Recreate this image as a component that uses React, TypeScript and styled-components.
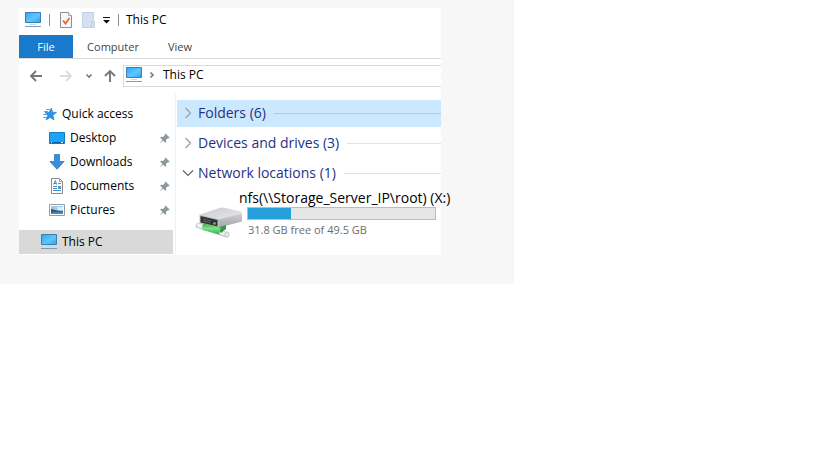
import React from "react";
import styled, { createGlobalStyle } from "styled-components";

const GlobalStyle = createGlobalStyle`
  * { box-sizing: border-box; }
  body {
    margin: 0;
    background: #ffffff;
    color: #000000;
    font: 12px/16px "Open Sans", "Noto Sans", sans-serif;
  }
  button { font: inherit; color: inherit; border: 0; padding: 0; background: none; cursor: pointer; }
  a { color: inherit; text-decoration: none; }
  svg { display: block; flex: none; }
`;

const Backdrop = styled.main`
  max-width: 514px;
  padding: 8px 73px 29px 19px;
  background: #f7f7f7;
`;

const Window = styled.section`
  background: #ffffff;
`;

const TitleBar = styled.header`
  display: flex;
  align-items: center;
  height: 27px;
  padding: 0 6px 4px;
`;

const QuickTools = styled.div`
  display: flex;
  align-items: center;
  gap: 8px;
  margin: 0 0 0 9px;
`;

const Divider = styled.span`
  width: 1px;
  height: 12px;
  margin-left: 7px;
  background: #8c8c8c;
`;

const Title = styled.h1`
  margin: 0 0 0 7px;
  font-size: 12px;
  font-weight: 400;
`;

const TabBar = styled.nav`
  display: flex;
  border-bottom: 1px solid #dadada;
`;

const Tab = styled.button<{ $active?: boolean; $width: number }>`
  width: ${(p) => p.$width}px;
  height: 23px;
  font-size: 11px;
  color: ${(p) => (p.$active ? "#ffffff" : "#444444")};
  background: ${(p) => (p.$active ? "#1979ca" : "transparent")};
`;

const AddressBar = styled.div`
  display: flex;
  align-items: center;
  padding: 6px 0 7px 10px;
`;

const NavButton = styled.button<{ $gap: number }>`
  margin-right: ${(p) => p.$gap}px;
`;

const AddressField = styled.div`
  display: flex;
  flex: 1;
  align-items: center;
  gap: 6px;
  height: 22px;
  padding: 0 2px 2px;
  border: 1px solid #d9d9d9;
  border-right: 0;
`;

const Body = styled.div`
  display: flex;
`;

const Sidebar = styled.nav`
  flex: none;
  width: 157px;
  padding: 8px 2px 1px 0;
  border-right: 1px solid #f0f0f0;
`;

const SideLink = styled.a<{ $indent: number; $gap: number; $selected?: boolean }>`
  display: flex;
  align-items: center;
  gap: ${(p) => p.$gap}px;
  height: 24px;
  margin-top: ${(p) => (p.$selected ? 8 : 0)}px;
  padding: 0 3px 0 ${(p) => p.$indent}px;
  background: ${(p) => (p.$selected ? "#d9d9d9" : "transparent")};
`;

const SideLabel = styled.span`
  flex: 1;
`;

const Content = styled.section`
  flex: 1;
  min-width: 0;
  padding: 6px 0 0 1px;
`;

const GroupHeader = styled.button<{ $selected?: boolean }>`
  display: flex;
  align-items: center;
  width: 100%;
  height: 27px;
  margin-bottom: 3px;
  padding: 0 0 1px 5px;
  gap: 4px;
  color: #1e3287;
  font-size: 14px;
  white-space: nowrap;
  background: ${(p) => (p.$selected ? "#cce8ff" : "transparent")};

  &::after {
    content: "";
    flex: 1;
    height: 1px;
    margin-left: 4px;
    background: ${(p) => (p.$selected ? "#aacbe2" : "#e2e2e2")};
  }
`;

const Drive = styled.article`
  padding-right: 5px;
`;

const DriveName = styled.h2`
  margin: 0;
  padding: 0 0 2px 62px;
  font-size: 14px;
  font-weight: 400;
  line-height: 15px;
  white-space: nowrap;
`;

const DriveDetails = styled.div`
  display: flex;
  gap: 4px;
  padding-left: 18px;
`;

const Capacity = styled.div`
  flex: 1;
`;

const CapacityBar = styled.div`
  height: 13px;
  border: 1px solid #bcbcbc;
  background: #e6e6e6;
`;

const CapacityUsed = styled.div`
  height: 100%;
  background: #26a0da;
`;

const CapacityText = styled.p`
  margin: 2px 0 0 1px;
  font-size: 11px;
  color: #6d6d6d;
`;

function Monitor() {
  return (
    <svg width="17" height="16" viewBox="0 0 17 16" aria-hidden="true">
      <defs>
        <linearGradient id="screen" x1="0" y1="0" x2="1" y2="1">
          <stop offset="0" stopColor="#2fa6f5" />
          <stop offset=".55" stopColor="#5fc5ff" />
          <stop offset="1" stopColor="#28a5f7" />
        </linearGradient>
      </defs>
      <path d="M.5 .5h15v10H.5z" fill="url(#screen)" stroke="#3c7fae" />
      <path d="M5 12.500h6" stroke="#c6dbe8" />
      <path d="M0 14.500h16" stroke="#7c9db8" />
    </svg>
  );
}

function CheckedPage() {
  return (
    <svg width="14" height="16" viewBox="0 0 14 16" aria-hidden="true">
      <path d="M1.500 .5h8l3 3v12h-11z" fill="#f8f8f8" stroke="#8f8f8f" />
      <path d="M9.500 .5v3h3" fill="#fff" stroke="#a5a5a5" />
      <path d="M4 8.500l2.500 3L10.500 6" fill="none" stroke="#ec6527" strokeWidth="1.700" />
    </svg>
  );
}

function PaleFolder() {
  return (
    <svg width="14" height="16" viewBox="0 0 14 16" aria-hidden="true">
      <path d="M1.500 .5h11v9h1v6h-12z" fill="#d5e0f3" stroke="#c5d3e8" />
      <path d="M10.500 15V9.500h2" fill="none" stroke="#bdcde4" />
    </svg>
  );
}

function CustomizeArrow() {
  return (
    <svg width="8" height="8" viewBox="0 0 8 8" aria-hidden="true">
      <path d="M0 1h7v1H0zM0 4h7L3.500 7.500z" fill="#111" />
    </svg>
  );
}

function Arrow({ direction }: { direction: "left" | "right" | "up" }) {
  const turn = { left: 0, right: 180, up: 90 }[direction];
  return (
    <svg width="14" height="14" viewBox="0 0 14 14" aria-hidden="true">
      <path
        d="M13 7H2M7 2L2 7l5 5"
        transform={`rotate(${turn} 7 7)`}
        fill="none"
        stroke={direction === "right" ? "#dcdcdc" : "#777"}
        strokeWidth="1.900"
      />
    </svg>
  );
}

function SmallChevron({ down }: { down?: boolean }) {
  return (
    <svg width="8" height="8" viewBox="0 0 8 8" aria-hidden="true">
      <path d={down ? "M1.500 2.500L4 5l2.500-2.500" : "M1.500 1.500L4 4 1.500 6.500"} fill="none" stroke="#777" strokeWidth="1.600" />
    </svg>
  );
}

function GroupChevron({ open }: { open?: boolean }) {
  return (
    <svg width="12" height="12" viewBox="0 0 12 12" aria-hidden="true">
      <path
        d={open ? "M1 3.500l5 5 5-5" : "M3.500 1L8.500 6l-5 5"}
        fill="none"
        stroke={open ? "#5f5f5f" : "#9b9b9b"}
        strokeWidth="1.100"
      />
    </svg>
  );
}

function Star() {
  return (
    <svg width="16" height="16" viewBox="0 0 16 16" aria-hidden="true">
      <path d="M9.500 2l1 4.200 4 .2-3.600 2.900 1.100 4.700-3.900-2.600L4 14l1.700-4.700L3 6.400h4z" fill="#2196ec" stroke="#1a7cc6" strokeWidth=".6" />
      <path d="M4 3.500h4M2 5.500h4M1 8.500h4M1 11.500h4" stroke="#58aeec" />
    </svg>
  );
}

function DesktopIcon() {
  return (
    <svg width="16" height="16" viewBox="0 0 16 16" aria-hidden="true">
      <path d="M.5 2.500h15v11H.5z" fill="#1ca4fa" stroke="#167bc4" />
      <path d="M1 12.500h14" stroke="#0b5d9b" />
      <path d="M2 12.500h1m9 0h2" stroke="#d8f0ff" />
    </svg>
  );
}

function DownloadIcon() {
  return (
    <svg width="16" height="16" viewBox="0 0 16 16" aria-hidden="true">
      <path d="M5.500 .5h5v7h4.500L8 15.300 1 7.500h4.500z" fill="#3b8ede" stroke="#2f78be" strokeWidth=".8" />
    </svg>
  );
}

function DocumentIcon() {
  return (
    <svg width="16" height="16" viewBox="0 0 16 16" aria-hidden="true">
      <path d="M2.500 .5h8l3 3v12h-11z" fill="#fff" stroke="#8a8a8a" />
      <path d="M10.500 .5v3h3" fill="none" stroke="#a0a0a0" />
      <path d="M4.500 6.500l2-4 1 4M5 5.500h2" fill="none" stroke="#3686c8" />
      <path d="M9 5.500h3M4 8.500h4M4 10.500h4M4 12.500h8" stroke="#4c91c9" />
      <path d="M9 8h3v3H9z" fill="#5d97b5" />
    </svg>
  );
}

function PictureIcon() {
  return (
    <svg width="16" height="16" viewBox="0 0 16 16" aria-hidden="true">
      <path d="M.5 2.500h15v11H.5z" fill="#fff" stroke="#9b9b9b" />
      <path d="M2 4h12v8H2z" fill="#9cccf2" />
      <path d="M8 5h6v3H9z" fill="#dceefa" />
      <path d="M2 7c3 0 4 2 12 2v3H2z" fill="#31606d" />
      <path d="M2 10.500c4-1 8 0 12-1V12H2z" fill="#4d87b7" />
    </svg>
  );
}

function Pin() {
  return (
    <svg width="11" height="11" viewBox="0 0 11 11" aria-hidden="true">
      <path d="M6.500 .5l4 4-1 1-.8-.3L7 7l.2 2-1 .8L4 7.500.5 10.500l2.800-3.700L1.200 4.700 2 3.800l2 .2 1.900-1.700-.4-.9z" fill="#8b979f" />
    </svg>
  );
}

function NetworkDrive() {
  return (
    <svg width="48" height="34" viewBox="0 0 48 34" aria-hidden="true">
      <defs>
        <linearGradient id="driveTop" x1="0" y1="0" x2="1" y2="1">
          <stop offset="0" stopColor="#c9cacd" />
          <stop offset="1" stopColor="#e9e9ec" />
        </linearGradient>
        <linearGradient id="driveSide" x1="0" y1="0" x2="0" y2="1">
          <stop offset="0" stopColor="#d2d2d6" />
          <stop offset="1" stopColor="#a3a4a9" />
        </linearGradient>
        <linearGradient id="cable" x1="0" y1="0" x2="0" y2="1">
          <stop offset="0" stopColor="#3aa94a" />
          <stop offset=".45" stopColor="#7be385" />
          <stop offset="1" stopColor="#2eb043" />
        </linearGradient>
      </defs>
      <path d="M5 8.500L24 12l23-6v8.500L24 20.500 5 16z" fill="url(#driveSide)" />
      <path d="M5 7.500L25 .8q2-.5 4 0L46 4.500q1.500.8 0 1.500L24 12.500z" fill="url(#driveTop)" />
      <path d="M4.500 7.500L24 12.200V20.500L4.500 16z" fill="#bdbec1" />
      <path d="M5.500 9l17 4v6.500L5.500 15.500z" fill="#313335" />
      <path d="M8 12l8 2M8 14l7 1.700" stroke="#6c7072" strokeWidth=".8" />
      <circle cx="19.500" cy="16.500" r="1.300" fill="#43e445" />
      <path d="M3.500 18.500L31 27.500" stroke="#b5babd" strokeWidth="5.500" strokeLinecap="round" />
      <path d="M3.500 18.300L31 27" stroke="#eff1f2" strokeWidth="4" strokeLinecap="round" />
      <path d="M22 21l9-3v4l-5 4z" fill="#2c9d40" />
      <path d="M8.500 16.500l17.500 4.500q-2 2-1.500 6.500L7.500 23q-1-3.500 1-6.500z" fill="url(#cable)" />
      <ellipse cx="32" cy="27.500" rx="2.100" ry="2.600" fill="#e7e9ea" stroke="#b4b8ba" strokeWidth=".7" />
    </svg>
  );
}

const shortcuts = [
  { label: "Desktop", icon: <DesktopIcon /> },
  { label: "Downloads", icon: <DownloadIcon /> },
  { label: "Documents", icon: <DocumentIcon /> },
  { label: "Pictures", icon: <PictureIcon /> },
];

const drive = { name: "nfs(\\\\Storage_Server_IP\\root) (X:)", text: "31.8 GB free of 49.5 GB", used: 23 };

export default function App() {
  return (
    <>
      <GlobalStyle />
      <Backdrop>
        <Window>
          <TitleBar>
            <Monitor />
            <Divider />
            <QuickTools>
              <button aria-label="Properties"><CheckedPage /></button>
              <button aria-label="New folder"><PaleFolder /></button>
              <button aria-label="Customize toolbar"><CustomizeArrow /></button>
            </QuickTools>
            <Divider />
            <Title>This PC</Title>
          </TitleBar>
          <TabBar>
            <Tab $active $width={54}>File</Tab>
            <Tab $width={80}>Computer</Tab>
            <Tab $width={54}>View</Tab>
          </TabBar>
          <AddressBar>
            <NavButton $gap={16} aria-label="Back"><Arrow direction="left" /></NavButton>
            <NavButton $gap={12} aria-label="Forward"><Arrow direction="right" /></NavButton>
            <NavButton $gap={10} aria-label="Recent locations"><SmallChevron down /></NavButton>
            <NavButton $gap={6} aria-label="Up"><Arrow direction="up" /></NavButton>
            <AddressField>
              <Monitor />
              <SmallChevron />
              <a href="#this-pc">This PC</a>
            </AddressField>
          </AddressBar>
          <Body>
            <Sidebar>
              <SideLink href="#quick-access" $indent={23} $gap={4}>
                <Star />
                <SideLabel>Quick access</SideLabel>
              </SideLink>
              {shortcuts.map((s) => (
                <SideLink key={s.label} href={`#${s.label.toLowerCase()}`} $indent={30} $gap={5}>
                  {s.icon}
                  <SideLabel>{s.label}</SideLabel>
                  <Pin />
                </SideLink>
              ))}
              <SideLink href="#this-pc" $indent={22} $gap={4} $selected>
                <Monitor />
                <SideLabel>This PC</SideLabel>
              </SideLink>
            </Sidebar>
            <Content>
              <GroupHeader $selected aria-expanded={false}><GroupChevron />Folders (6)</GroupHeader>
              <GroupHeader aria-expanded={false}><GroupChevron />Devices and drives (3)</GroupHeader>
              <GroupHeader aria-expanded><GroupChevron open />Network locations (1)</GroupHeader>
              <Drive>
                <DriveName>{drive.name}</DriveName>
                <DriveDetails>
                  <NetworkDrive />
                  <Capacity>
                    <CapacityBar role="progressbar" aria-label="Space used" aria-valuenow={drive.used}>
                      <CapacityUsed style={{ width: `${drive.used}%` }} />
                    </CapacityBar>
                    <CapacityText>{drive.text}</CapacityText>
                  </Capacity>
                </DriveDetails>
              </Drive>
            </Content>
          </Body>
        </Window>
      </Backdrop>
    </>
  );
}
